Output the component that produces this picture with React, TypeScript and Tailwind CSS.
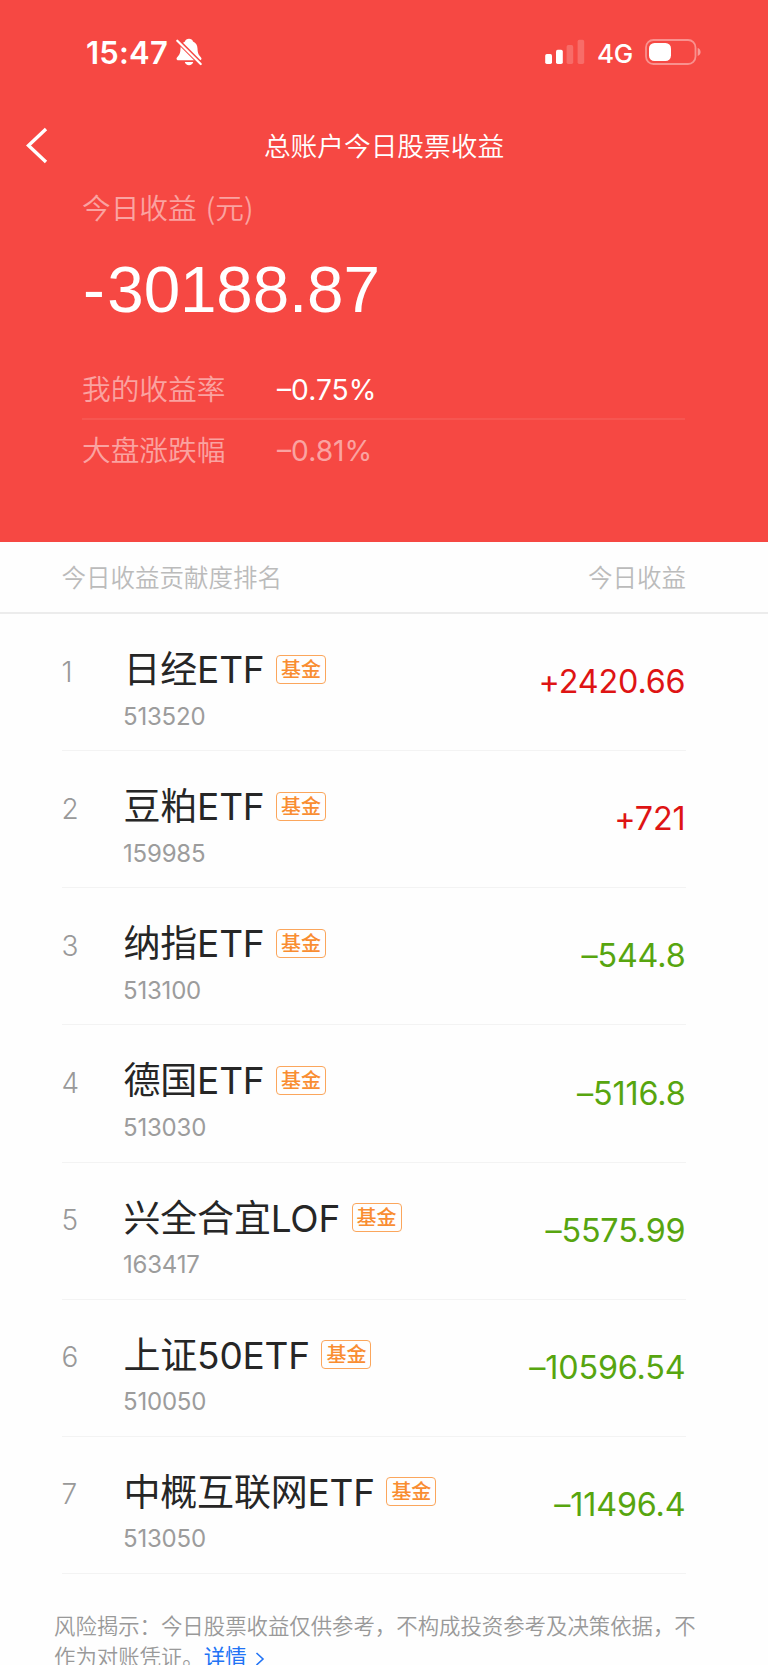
import React from "react";

type Holding = { name: string; code: string; amount: string; up: boolean };

const holdings: Holding[] = [
  { name: "日经ETF", code: "513520", amount: "+2420.66", up: true },
  { name: "豆粕ETF", code: "159985", amount: "+721", up: true },
  { name: "纳指ETF", code: "513100", amount: "–544.8", up: false },
  { name: "德国ETF", code: "513030", amount: "–5116.8", up: false },
  { name: "兴全合宜LOF", code: "163417", amount: "–5575.99", up: false },
  { name: "上证50ETF", code: "510050", amount: "–10596.54", up: false },
  { name: "中概互联网ETF", code: "513050", amount: "–11496.4", up: false },
];

function MutedBell() {
  return (
    <svg width="26" height="28" viewBox="0 0 26 28" fill="none" className="ml-[8px]">
      <path
        d="M13 .8c-2 0-3.600 1.100-4 2.600C6 4.700 4.600 7.200 4.500 10.500c-.1 4-.6 5.700-2.500 7.700-.8.900-1.500 1.700-1.500 2.500 0 .9.700 1.500 1.800 1.500h21.400c1.100 0 1.800-.6 1.800-1.500 0-.8-.7-1.600-1.500-2.500-1.900-2-2.400-3.700-2.500-7.700-.1-3.300-1.500-5.800-4.500-7.100C16.600 1.900 15 .8 13 .8Z"
        fill="#fff"
      />
      <path d="M8.800 24h8.400c-.3 1.900-2.100 3.300-4.200 3.300S9.100 25.900 8.800 24Z" fill="#fff" />
      <path d="M0 1 26 27" stroke="#f64843" strokeWidth="4.600" />
      <path d="M1.300 2.700 24.700 26" stroke="#fff" strokeWidth="2.200" strokeLinecap="round" />
    </svg>
  );
}

function Signal() {
  return (
    <svg width="40" height="26" viewBox="0 0 40 26" fill="#fff">
      <rect x="0.200" y="15" width="6.800" height="10" rx="1.700" />
      <rect x="11" y="10.800" width="6.800" height="14.200" rx="1.700" />
      <rect x="21.600" y="6" width="6.600" height="19" rx="1.700" opacity="0.2" />
      <rect x="32.600" y="0.700" width="6.600" height="24.300" rx="1.700" opacity="0.2" />
    </svg>
  );
}

function Battery() {
  return (
    <svg width="57" height="26" viewBox="0 0 57 26" fill="none">
      <rect x="1" y="1" width="49.500" height="24" rx="7.500" stroke="#fff" strokeOpacity="0.4" strokeWidth="1.800" />
      <rect x="4" y="4" width="22" height="18" rx="5.500" fill="#fff" />
      <path d="M52.700 9c1.800.6 2.900 2.200 2.900 4s-1.100 3.400-2.900 4V9Z" fill="#fff" fillOpacity="0.450" />
    </svg>
  );
}

function StatusBar() {
  return (
    <div className="flex h-[104px] items-center justify-between pl-[86px] pr-[66px]">
      <div className="flex items-center">
        <span className="text-[31px] font-semibold leading-none tracking-[0.200px]">15:47</span>
        <MutedBell />
      </div>
      <div className="flex items-center">
        <Signal />
        <span className="ml-[12px] w-[48px] pt-[3px] text-[26px] font-medium leading-none tracking-[-0.3px]">4G</span>
        <Battery />
      </div>
    </div>
  );
}

function HoldingRow({ item, rank }: { item: Holding; rank: number }) {
  return (
    <li className="ml-[61.500px] mr-[82.500px] flex h-[137.150px] border-b border-[#f3f3f3]">
      <span className="w-[61.500px] pt-[38.500px] text-[28px] font-[350] leading-[38px] text-[#999]">{rank}</span>
      <div className="flex-1">
        <div className="mt-[35px] flex h-[42px] items-center">
          <span className="whitespace-nowrap pl-[0.500px] text-[37px] font-[370] leading-[42px] tracking-[-0.200px] text-[#262626]">
            {item.name}
          </span>
          <span className="mb-[2px] ml-[11.500px] flex h-[29px] w-[50px] items-center justify-center rounded-[4px] border border-[#fba65c] pt-px text-[20px] font-medium leading-none text-[#f98d31]">
            基金
          </span>
        </div>
        <div className="mt-[10.500px] text-[24px] font-[370] leading-[30px] tracking-[-0.200px] text-[#9c9c9c]">{item.code}</div>
      </div>
      <span
        className={
          item.up
            ? "pt-[48.200px] text-[32.300px] font-[370] leading-[40px] tracking-[-0.150px] text-[#de1414]"
            : "pt-[48.200px] text-[32.300px] font-[370] leading-[40px] tracking-[-0.150px] text-[#57a50f]"
        }
      >
        {item.amount}
      </span>
    </li>
  );
}

export default function App() {
  return (
    <main className="h-[1665px] w-[768px] overflow-hidden bg-[#fefefe] font-['Inter','Noto_Sans_CJK_SC',sans-serif]">
      <header className="h-[542px] bg-[#f64843] text-white">
        <StatusBar />
        <div className="grid h-[83px] grid-cols-[100px_1fr_100px] items-center">
          <svg width="24" height="38" viewBox="0 0 24 38" fill="none" className="ml-[25px]">
            <path d="M21 2 3.500 18.500 21 35" stroke="#fff" strokeWidth="3.400" />
          </svg>
          <h1 className="pt-px text-center text-[26.700px] font-[350] leading-none">总账户今日股票收益</h1>
        </div>
        <section className="pl-[82px] pr-[83px]">
          <p className="h-[42px] font-['Noto_Sans_CJK_SC',sans-serif] text-[28.700px] font-[350] leading-[40px] text-white/50">
            今日收益<span className="ml-[9px]">(元)</span>
          </p>
          <p className="mt-[24px] pl-px font-['Liberation_Sans',sans-serif] text-[65.600px] leading-[74px] tracking-[-0.150px]">
            <span className="tracking-[2.500px]">-</span>30188.87
          </p>
          <div className="mt-[31px] flex h-[62px] items-center border-b-2 border-white/8 text-[28.700px] font-[350] leading-none">
            <span className="w-[195px] pt-[5px] text-white/50">我的收益率</span>
            <span className="pt-[4px] text-[28.200px] font-normal">–0.75%</span>
          </div>
          <div className="flex h-[63px] items-center text-[28.700px] font-[350] leading-none text-white/50">
            <span className="w-[195px]">大盘涨跌幅</span>
            <span className="text-[28.200px] font-normal">–0.81%</span>
          </div>
        </section>
      </header>
      <div className="flex h-[72px] items-center justify-between border-b-2 border-[#ececec] pl-[61.500px] pr-[82px] pt-[3px] text-[24.500px] font-[350] leading-none text-[#bbb]">
        <span>今日收益贡献度排名</span>
        <span>今日收益</span>
      </div>
      <ul>
        {holdings.map((item, i) => (
          <HoldingRow key={item.code} item={item} rank={i + 1} />
        ))}
      </ul>
      <p className="ml-[54px] mt-[37px] w-[660px] text-[21.400px] font-[350] leading-[31px] text-[#999]">
        风险揭示：今日股票收益仅供参考，不构成投资参考及决策依据，不
        <br />
        作为对账凭证。
        <a className="font-normal text-[#2173f5]">
          详情
          <svg width="10" height="16" viewBox="0 0 10 16" fill="none" className="ml-[8px] inline-block align-[-2px]">
            <path d="M1.500 2 8 8l-6.500 6" stroke="#2173f5" strokeWidth="1.600" />
          </svg>
        </a>
      </p>
    </main>
  );
}
